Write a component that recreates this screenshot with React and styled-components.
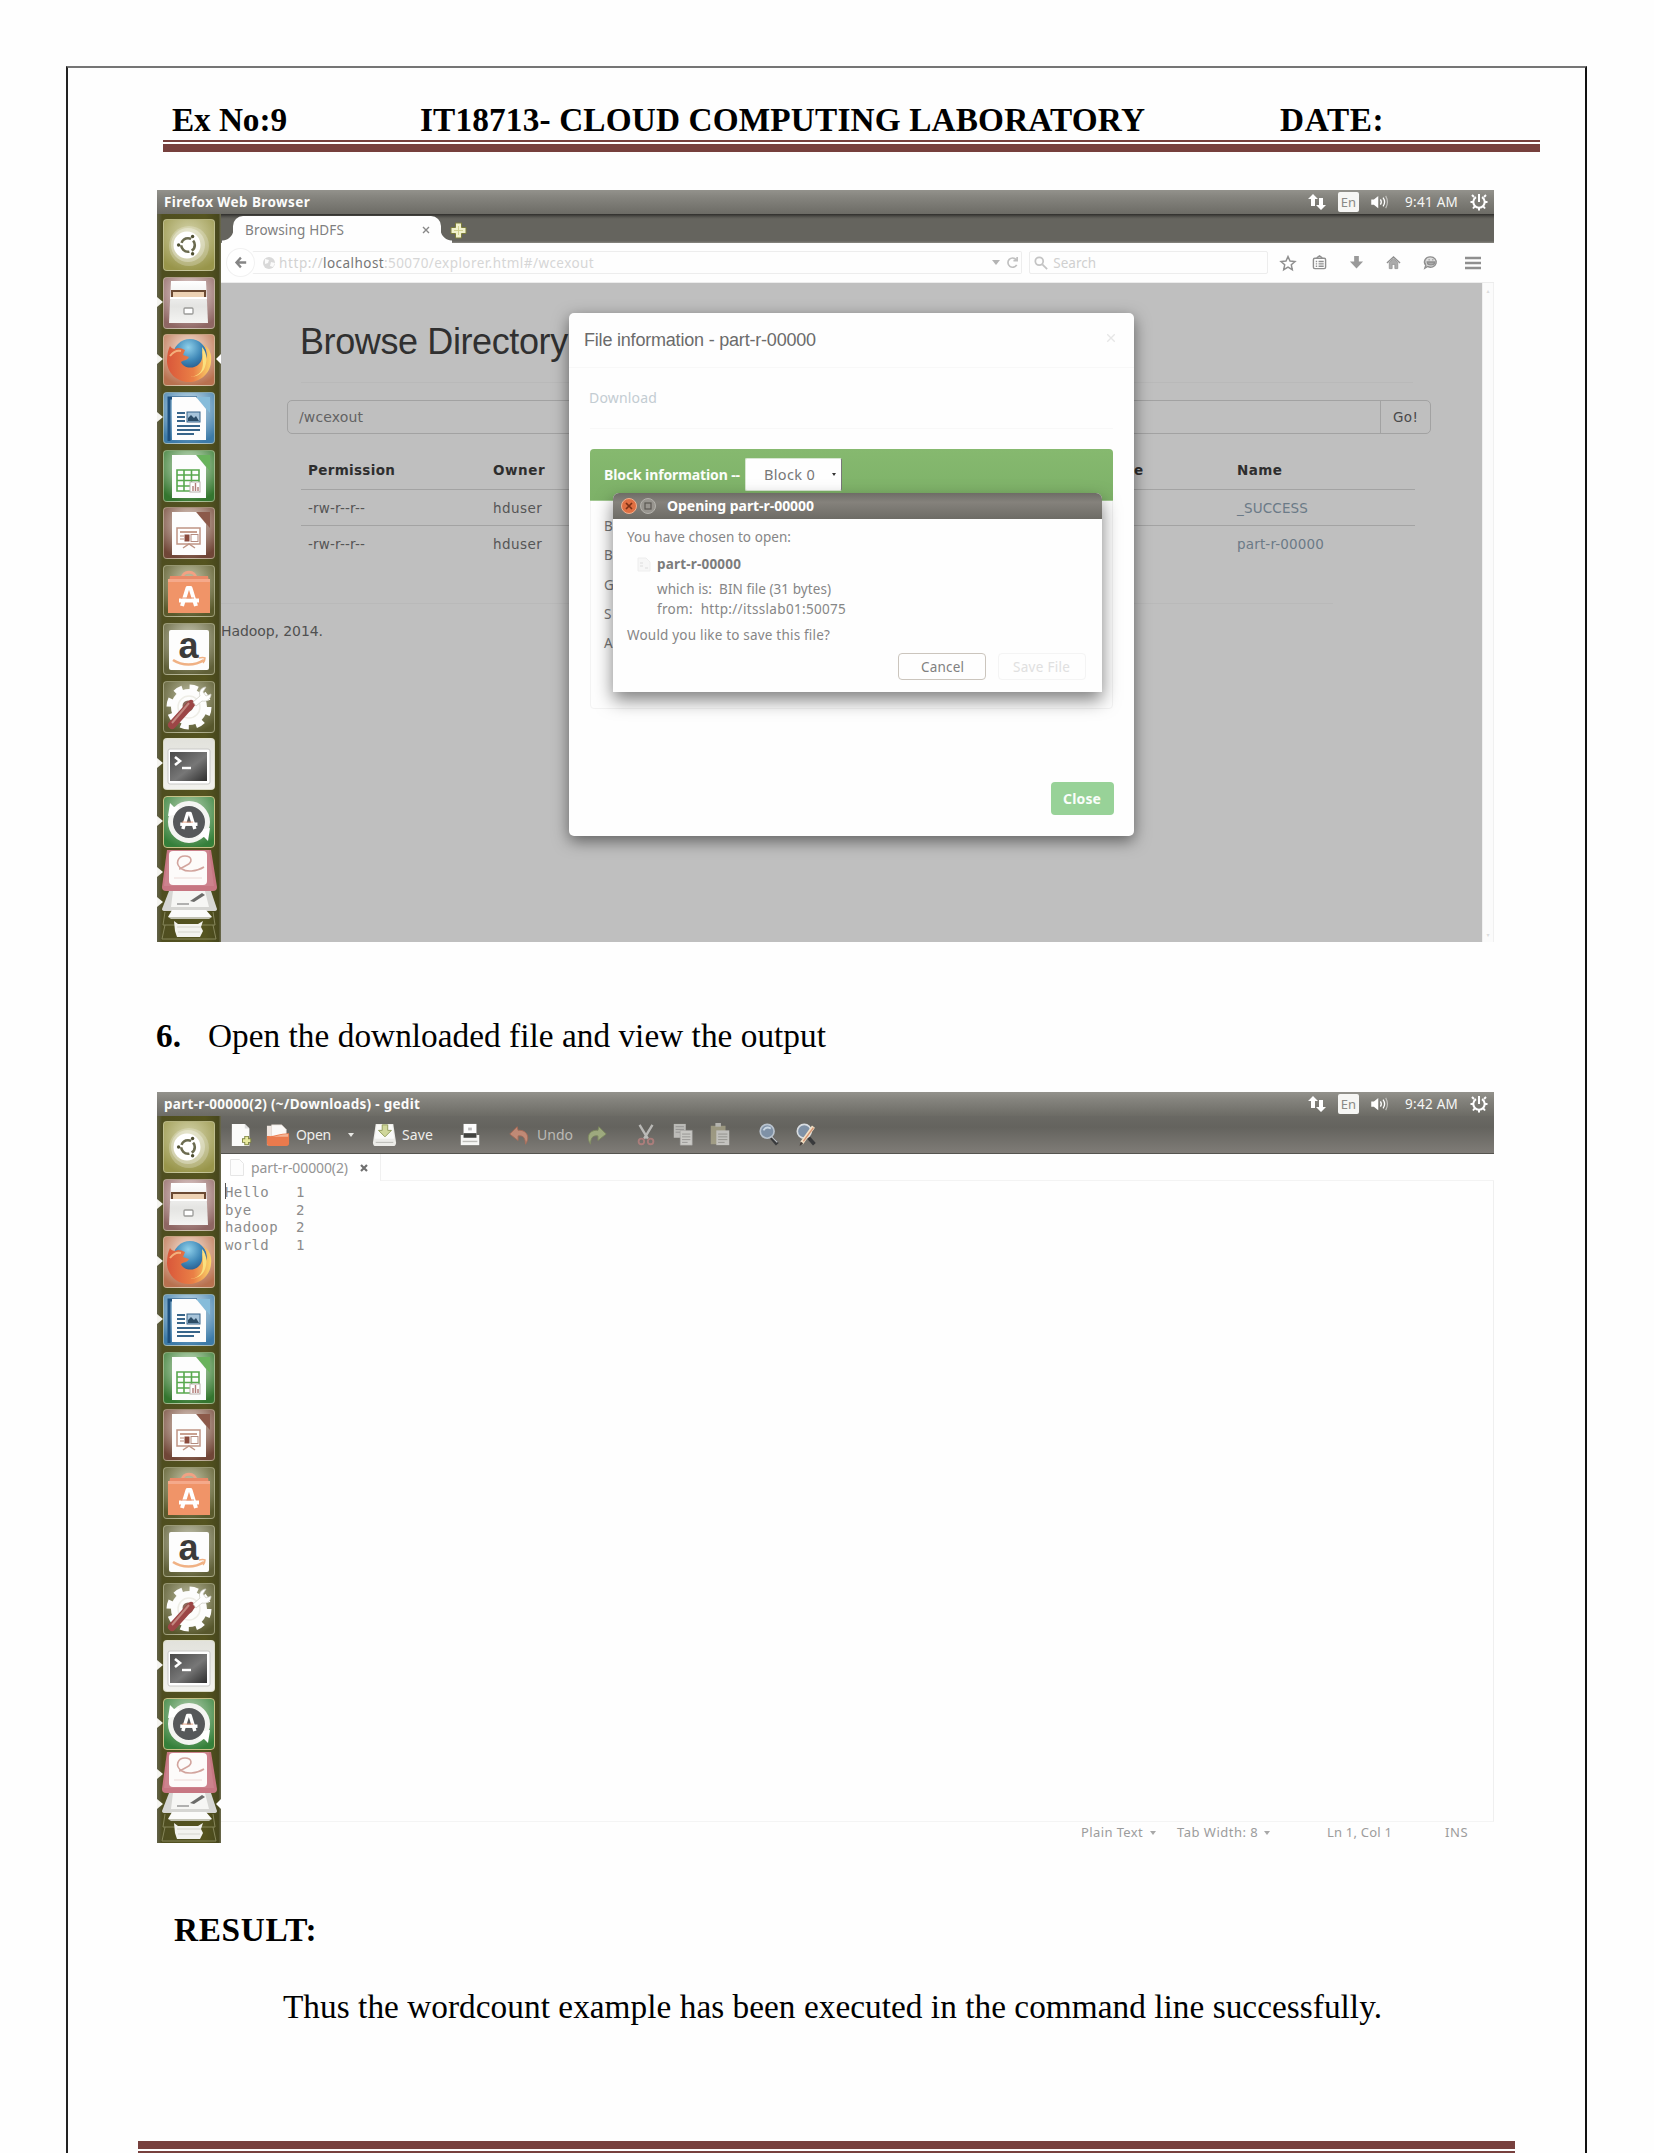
import React, { useLayoutEffect, useRef, useState } from "react";
import styled, { createGlobalStyle } from "styled-components";

const serif = '"Liberation Serif", "Times New Roman", serif';
const sans = '"Liberation Sans", Arial, sans-serif';
const ui = '"Noto Sans", "Open Sans", sans-serif';
const web = '"DejaVu Sans", Verdana, sans-serif';
const mono = '"DejaVu Sans Mono", monospace';

const Global = createGlobalStyle`
  * { box-sizing: border-box; }
  html, body { margin: 0; padding: 0; background: #fefefe; }
  body { width: 1654px; height: 2153px; overflow: hidden; }
  svg { display: block; flex: none; overflow: visible; }
`;

/* Text tracked out so that its line is exactly `w` pixels wide. */
const Line = styled.span`
  display: block;
  flex: none;
  width: ${(p) => p.$w}px;
  margin-left: ${(p) => p.$ml || 0}px;
  font-family: ${(p) => p.$font};
  font-size: ${(p) => p.$size}px;
  font-weight: ${(p) => (p.$bold ? 700 : 400)};
  color: ${(p) => p.$color};
  line-height: ${(p) => p.$lh || Math.round(p.$size * 1.3)}px;
  white-space: pre;
`;
function Fit({ w, ml, font = ui, size = 14, bold, color = "#777", lh, children }) {
  const ref = useRef(null);
  const [spacing, setSpacing] = useState(0);
  useLayoutEffect(() => {
    const el = ref.current;
    const natural = el.getBoundingClientRect().width;
    setSpacing((w - natural) / Math.max(1, el.textContent.length - 0.5));
  }, [w]);
  return (
    <Line $w={w} $ml={ml} $font={font} $size={size} $bold={bold} $color={color} $lh={lh}>
      <span ref={ref} style={{ letterSpacing: spacing ? `${spacing}px` : undefined }}>{children}</span>
    </Line>
  );
}
const Gap = styled.i`
  flex: none;
  width: ${(p) => p.$w}px;
`;

/* ---------- document ---------- */
const Page = styled.main`
  width: 1654px;
  height: 2153px;
  overflow: hidden;
  padding: 66px 0 0 66px;
  background: #fefefe;
`;
const Sheet = styled.div`
  width: 1521px;
  height: 2087px;
  border: solid #111;
  border-width: 2px 2px 0 2px;
  border-top-color: #757575;
  border-left-color: #222;
`;
const DocHeader = styled.header`
  display: flex;
  align-items: center;
  height: 72px;
  padding: 35px 0 4px 104px;
`;
const Rule = styled.div`
  width: 1377px;
  height: ${(p) => (p.$flip ? 13 : 12)}px;
  margin-top: ${(p) => (p.$flip ? 115 : 0)}px;
  margin-left: ${(p) => (p.$flip ? 70 : 95)}px;
  border: solid #77403d;
  border-width: ${(p) => (p.$flip ? "8px 0 3px" : "2px 0 8px")};
`;
const Paragraph = styled.div`
  display: flex;
  margin: ${(p) => p.$m};
`;

/* ---------- desktop frame ---------- */
const Desktop = styled.section`
  width: 1337px;
  height: ${(p) => p.$h}px;
  margin: ${(p) => p.$mt}px 0 0 89px;
  display: flex;
  flex-direction: column;
  overflow: hidden;
`;
const TopBar = styled.div`
  display: flex;
  align-items: center;
  flex: none;
  height: 24px;
  padding: 0 6px 0 7px;
  background: linear-gradient(#93928c, #85847e 30%, #6c6b65);
`;
const Tray = styled.div`
  display: flex;
  align-items: center;
  margin-left: auto;
`;
const Lang = styled.span`
  width: 21px;
  height: 20px;
  margin: 0 11px 0 12px;
  border-radius: 2px;
  background: #f6f6f4;
  color: #8a8a86;
  font: 13px/20px ${ui};
  text-align: center;
`;
const Body = styled.div`
  display: flex;
  flex: 1;
  min-height: 0;
`;
const Dock = styled.nav`
  flex: none;
  width: 64px;
  padding-top: 5px;
  display: flex;
  flex-direction: column;
  overflow: hidden;
  background: linear-gradient(90deg, #62624a, #4f4e20 8%, #55541f 75%, #47471d 96%, #6d6c52);
`;
const Slot = styled.div`
  position: relative;
  flex: none;
  width: 64px;
  height: 57.7px;
  padding-left: 6px;
`;
const StackSlot = styled.div`
  position: relative;
  flex: none;
  margin-top: -4px;
`;
const Pip = styled.i`
  position: absolute;
  top: ${(p) => p.$top || 20}px;
  ${(p) => (p.$right ? "right: 0; border-right: 5px solid #fff;" : "left: 0; border-left: 6px solid #f4f4f0;")}
  border-top: 5px solid transparent;
  border-bottom: 5px solid transparent;
`;
const Tile = styled.div`
  width: 52px;
  height: 52px;
  border-radius: 4px;
  border: 1px solid ${(p) => p.$edge || "rgba(210,210,180,.5)"};
  background: ${(p) => p.$bg};
`;
const Main = styled.div`
  flex: 1;
  min-width: 0;
  display: flex;
  flex-direction: column;
  position: relative;
  background: #fefefe;
`;

/* ---------- dock icons ---------- */
const Art = ({ children }) => (
  <svg width="50" height="50" viewBox="1 1 50 50">{children}</svg>
);
const sheetPath = "M9 5h24l10 12v31H9z";

const UbuntuIcon = () => (
  <Art>
    <circle cx="26" cy="27" r="20" fill="#fff" opacity=".22" />
    <circle cx="25" cy="26" r="17" fill="#fff" opacity=".3" />
    <circle cx="24" cy="26" r="13.5" fill="#fff" />
    <circle cx="25" cy="26" r="6.8" fill="none" stroke="#6b6b50" strokeWidth="2.600" strokeDasharray="11.7 2.5" strokeDashoffset="5" />
    <circle cx="15.6" cy="26" r="1.700" fill="#4f4f32" />
    <circle cx="29.6" cy="17.5" r="1.700" fill="#4f4f32" />
    <circle cx="29.6" cy="34.8" r="1.700" fill="#4f4f32" />
  </Art>
);
const FilesIcon = () => (
  <Art>
    <defs>
      <linearGradient id="drawer" x1="0" y1="0" x2="0" y2="1">
        <stop offset="0" stopColor="#fff" /><stop offset=".6" stopColor="#e4e4e2" /><stop offset="1" stopColor="#f4f4f2" />
      </linearGradient>
    </defs>
    <path d="M8 4h35l2 42H6z" fill="url(#drawer)" />
    <path d="M8 13h35v7H8z" fill="#6b4a33" />
    <path d="M10 15h31v6H10z" fill="#edd2b4" />
    <path d="M7 20h37v2H7z" fill="#fff" />
    <rect x="21" y="31" width="9" height="6" rx="1" fill="#fff" stroke="#9a9a98" strokeWidth="1.3" />
  </Art>
);
const FirefoxIcon = () => (
  <Art>
    <defs>
      <radialGradient id="globe" cx=".45" cy=".25" r=".8">
        <stop offset="0" stopColor="#8fd0ea" /><stop offset=".5" stopColor="#3d86b6" /><stop offset="1" stopColor="#1c3f72" />
      </radialGradient>
      <linearGradient id="fox" x1="0" y1="0" x2="1" y2="0">
        <stop offset="0" stopColor="#d9573a" /><stop offset=".6" stopColor="#ea8046" /><stop offset="1" stopColor="#fbd66a" />
      </linearGradient>
    </defs>
    <circle cx="27" cy="22" r="17" fill="url(#globe)" />
    <path d="M7 12c1 2 3 3 5 3 3-2 6-1 10 1l-2 5 6 2c-2 4-6 3-8 5 2 6 12 8 18 2 3-3 4-8 3-13 4 3 4 6 4 8 2-6 0-12-3-15 7 4 9 11 8 18-1 12-11 20-22 20C13 48 4 38 4 27c0-6 1-11 3-15z" fill="url(#fox)" />
    <path d="M39 13c4 4 6 12 3 20-2 6-8 10-15 10 9-1 13-6 13-14z" fill="#fbdf7e" />
    <path d="M7 22c3-4 6-6 11-5" fill="none" stroke="#f4b07c" strokeWidth="2" />
  </Art>
);
const WriterIcon = () => (
  <Art>
    <path d="M6 49V6h28" fill="none" stroke="#1d4f7c" strokeWidth="3" />
    <path d="M33 5l14 16V5z" fill="#86bcda" />
    <path d={sheetPath} fill="#fdfdfd" />
    <path d="M14 21h8M14 25h8M14 29h8M14 34h23M14 38h23M14 42h17" stroke="#38658a" strokeWidth="2" />
    <rect x="24" y="20" width="13" height="10" fill="#a7c4da" stroke="#38658a" />
    <path d="M25 29v-3l3-3 3 3 2-2 3 5z" fill="#2c4c66" />
  </Art>
);
const CalcIcon = () => (
  <Art>
    <path d="M33 5l14 16V5z" fill="#69b35c" />
    <path d={sheetPath} fill="#fdfdfd" />
    <path d="M14 20h22v21H14zM14 25h22M14 30.500h22M14 36h22M21 20v21M28.500 20v21" fill="none" stroke="#58a84e" strokeWidth="1.600" />
    <rect x="27" y="32" width="10" height="10" fill="#fff" stroke="#b9b2ae" />
    <path d="M30 41v-5M32.500 41v-8M35 41v-4" stroke="#b27c78" strokeWidth="1.400" />
  </Art>
);
const ImpressIcon = () => (
  <Art>
    <path d="M33 5l14 16V5z" fill="#8c5a4a" />
    <path d={sheetPath} fill="#fdfdfd" />
    <rect x="14" y="21" width="23" height="16" fill="#fff" stroke="#bf9484" strokeWidth="1.500" />
    <path d="M17 25h17" stroke="#c9a191" strokeWidth="2" />
    <path d="M17 29h4M17 32h4" stroke="#b98a78" />
    <rect x="21.500" y="27.500" width="5" height="7" fill="#8a4a3c" />
    <rect x="28" y="27.500" width="7" height="7" fill="#fff" stroke="#b58c80" />
    <path d="M20 41l6-4 6 4" fill="none" stroke="#bf9484" strokeWidth="1.500" />
  </Art>
);
const StoreA = ({ y = 0 }) => (
  <g transform={`translate(0 ${y})`}>
    <path d="M19 41l5.500-18h3L33 41" fill="none" stroke="#fff" strokeWidth="4" strokeLinejoin="round" />
    <path d="M16 35.500h20" stroke="#fff" strokeWidth="4" />
    <path d="M18 33h13" stroke="#e89a78" strokeWidth="1" />
  </g>
);
const SoftwareIcon = () => (
  <Art>
    <path d="M19 14c0-9 14-9 14 0" fill="none" stroke="#f2a183" strokeWidth="3" />
    <path d="M7 11h38l1 7H6z" fill="#e98a68" />
    <path d="M5 14h42v34H5z" fill="#f09468" />
    <path d="M5 14h42v3H5z" fill="#f5a98a" />
    <StoreA />
  </Art>
);
const AmazonLetter = styled.text`
  font: 700 36px ${sans};
  fill: #3c3b3a;
`;
const AmazonIcon = () => (
  <Art>
    <rect x="6" y="7" width="40" height="40" rx="2" fill="#fdfdfd" />
    <AmazonLetter x="15.500" y="34.500">a</AmazonLetter>
    <path d="M10 37c9 6 22 6 31 0" fill="none" stroke="#f0b184" strokeWidth="2.600" />
    <path d="M36 35c4-1 6 0 6 0s0 3-2 5" fill="none" stroke="#f0b184" strokeWidth="1.500" />
  </Art>
);
const SettingsIcon = () => (
  <Art>
    <circle cx="26" cy="26" r="18" fill="#fdfdfc" />
    <circle cx="26" cy="26" r="19" fill="none" stroke="#fdfdfd" strokeWidth="7" strokeDasharray="7.900 7.020" />
    <circle cx="26" cy="26" r="11" fill="none" stroke="#eeede6" strokeWidth="1.500" />
    <circle cx="25" cy="25" r="5.500" fill="#8b6a5c" />
    <path d="M9 44l19-21" stroke="#9c4646" strokeWidth="8" strokeLinecap="round" />
    <path d="M9 42l17-20" stroke="#c38880" strokeWidth="2" />
    <path d="M30 21l7-6c-2-5 2-9 6-9l-3 5 3 4 5-2c0 5-4 8-9 7l-6 5z" fill="#fff" stroke="#c9c8bd" strokeWidth=".7" />
  </Art>
);
const TerminalIcon = () => (
  <Art>
    <defs>
      <linearGradient id="term" x1="0" y1="0" x2="1" y2="1">
        <stop offset="0" stopColor="#4a4a4a" /><stop offset=".55" stopColor="#777" /><stop offset="1" stopColor="#2e2e2e" />
      </linearGradient>
    </defs>
    <rect x="5" y="11" width="42" height="35" rx="2" fill="#fff" stroke="#c8c8c6" />
    <rect x="7" y="14" width="37" height="29" fill="url(#term)" />
    <path d="M12 19l5 4-5 4" fill="none" stroke="#fff" strokeWidth="2.600" />
    <path d="M19 30h9" stroke="#fff" strokeWidth="2.400" />
  </Art>
);
const UpdaterIcon = () => (
  <Art>
    <circle cx="26" cy="26" r="19" fill="#56585a" />
    <circle cx="26" cy="26" r="18.500" fill="none" stroke="#f4f5f2" strokeWidth="5" />
    <path d="M5 20l2-13 4 4 6-1-6 9z" fill="#fff" />
    <path d="M47 32l-2 13-4-4-6 1 6-9z" fill="#fff" />
    <g transform="translate(3.500 2) scale(.86)"><StoreA y={-5} /></g>
  </Art>
);
const StackArt = () => (
  <svg width="64" height="92" viewBox="0 0 64 92">
    <path d="M10 0h44l6 37q0 4-4 4H9q-4 0-4-4z" fill="#c77682" />
    <path d="M12 0h40l5 36H7z" fill="#d18a94" opacity=".6" />
    <rect x="12" y="1" width="38" height="34" rx="4" fill="#fdfbfa" />
    <path d="M47 17c-8 5-18 5-22 2-8-5-4-13 3-13s8 6 2 9-7 4-8 4" fill="none" stroke="#d2a49d" strokeWidth="1.600" />
    <path d="M17 28h28" stroke="#ecd9d6" strokeWidth="1" />
    <path d="M12 41h42l6 18q0 2-3 2H8q-3 0-3-2z" fill="#d6d6d3" />
    <path d="M16 41h32l4 16H14z" fill="#f6f6f4" />
    <path d="M33 51l12-8 3 2-11 7z" fill="#6b6b69" />
    <path d="M20 54h12" stroke="#999" strokeWidth="1.500" />
    <path d="M15 60h34l6 7H11z" fill="#fbfbfa" />
    <path d="M11 67h44l-3 2H14z" fill="#c2c2b4" />
    <path d="M8 62l-2 13h52l-2-13M8 75l-3 14h54l-3-14" fill="none" stroke="#85855a" strokeWidth="1" />
    <path d="M17 71l4 3h20l5-3-2 6 2 4-3 6H20l-2-6z" fill="#f3f3ef" />
    <path d="M20 77h24M21 82h22" stroke="#d5d5cd" strokeWidth="1" />
  </svg>
);

const radial = (mid, edge) => `radial-gradient(circle at 50% 30%, ${mid}, ${edge} 85%)`;
const dockItems = [
  { Icon: UbuntuIcon, bg: radial("#d7d6ae", "#98954a") },
  { Icon: FilesIcon, bg: radial("#ecdcda", "#8e6663"), pip: true },
  { Icon: FirefoxIcon, bg: radial("#fae8dc", "#b8714f"), pip: true, active: true },
  { Icon: WriterIcon, bg: radial("#d5e8f2", "#3d7ba8"), pip: true },
  { Icon: CalcIcon, bg: radial("#d3e8cd", "#34762f") },
  { Icon: ImpressIcon, bg: radial("#e6d8ce", "#704637") },
  { Icon: SoftwareIcon, bg: radial("#c8c8ac", "#5a5a2c") },
  { Icon: AmazonIcon, bg: radial("#c9c9b6", "#606038") },
  { Icon: SettingsIcon, bg: radial("#bdbda2", "#57572c") },
  { Icon: TerminalIcon, bg: "linear-gradient(#e2e2dc, #f2f2ee)", pip: true },
  { Icon: UpdaterIcon, bg: radial("#b9d3b4", "#35803a"), edge: "#c7c187", pip: true },
];
function Launcher({ firefoxActive }) {
  return (
    <Dock>
      {dockItems.map(({ Icon, bg, edge, pip, active }, i) => (
        <Slot key={i}>
          {pip && <Pip />}
          {active && firefoxActive && <Pip $right />}
          <Tile $bg={bg} $edge={edge}><Icon /></Tile>
        </Slot>
      ))}
      <StackSlot>
        <Pip $top={17} />
        <Pip $top={47} />
        {!firefoxActive && <Pip $top={47} $right />}
        <StackArt />
      </StackSlot>
    </Dock>
  );
}

function Panel({ title, width, time }) {
  return (
    <TopBar>
      <Fit w={width} bold size={13.500} color="#fbfbfa">{title}</Fit>
      <Tray>
        <svg width="18" height="18" viewBox="0 0 18 18" fill="#fff">
          <path d="M5 1L0 6h3v7h4V6h3zM13 17l5-5h-3V5h-4v7H8z" />
        </svg>
        <Lang>En</Lang>
        <svg width="20" height="14" viewBox="0 0 20 16">
          <path d="M0 5h3l5-4v14l-5-4H0z" fill="#fff" />
          <path d="M10.500 5q2 3 0 6M13.500 3q3.500 5 0 10" fill="none" stroke="#fff" strokeWidth="1.500" />
          <path d="M16.500 1q4 7 0 14" fill="none" stroke="#c3c2be" strokeWidth="1.300" />
        </svg>
        <Fit w={53} ml={15} color="#f6f6f4" size={13.500}>{time}</Fit>
        <Gap $w={12} />
        <svg width="18" height="18" viewBox="0 0 18 18">
          <path d="M6 4.200a5.700 5.700 0 1 0 6 0" fill="none" stroke="#fff" strokeWidth="2" />
          <path d="M9 1v8" stroke="#fff" strokeWidth="2" />
          <path d="M4 4L2 2M14 4l2-2M3.500 9H.5M14.500 9h3M5 13l-2 2.500M13 13l2 2.500M9 15v2.500" stroke="#fff" strokeWidth="2" />
        </svg>
      </Tray>
    </TopBar>
  );
}

/* ---------- firefox ---------- */
const TabStrip = styled.div`
  display: flex;
  align-items: flex-end;
  flex: none;
  height: 29px;
  padding-left: 12px;
  background: linear-gradient(#2f2e2b, #565550 3px, #65645e 5px, #65645e 27px, #8a8983);
`;
const BrowserTab = styled.div`
  position: relative;
  display: flex;
  align-items: center;
  width: 208px;
  height: 27px;
  padding-left: 12px;
  border-radius: 10px 10px 0 0;
  background: #fefefe;
  &::before, &::after {
    content: "";
    position: absolute;
    bottom: 0;
    width: 12px;
    height: 14px;
  }
  &::before { left: -11px; background: radial-gradient(circle at 0 0, transparent 11px, #fefefe 12px); }
  &::after { right: -11px; background: radial-gradient(circle at 100% 0, transparent 11px, #fefefe 12px); }
`;
const NewTab = styled.div`
  margin: 0 0 4px 9px;
`;
const NavBar = styled.div`
  display: flex;
  align-items: center;
  flex: none;
  height: 40px;
  background: #fefefe;
  border-bottom: 1px solid #ececec;
`;
const Back = styled.div`
  display: grid;
  place-items: center;
  z-index: 1;
  width: 29px;
  height: 29px;
  margin: 0 -3px 0 5px;
  border: 1px solid #f1f1f1;
  border-radius: 50%;
  background: #fff;
`;
const Field = styled.div`
  display: flex;
  align-items: center;
  width: ${(p) => p.$w}px;
  height: 23px;
  margin-right: ${(p) => p.$mr}px;
  padding-left: ${(p) => p.$pl}px;
  border: 1px solid #ededed;
  border-left-color: ${(p) => (p.$open ? "transparent" : "#ededed")};
  border-radius: 2px;
`;
const Tools = styled.div`
  display: grid;
  grid-template-columns: 31px 32px 42px 32px 42px 42px;
  justify-items: center;
  align-items: center;
  margin-left: 5px;
`;
const Viewport = styled.div`
  display: flex;
  flex: 1;
  position: relative;
  overflow: hidden;
`;
const WebPage = styled.div`
  width: 1261px;
  background: #bfbfbf;
`;
const Scrollbar = styled.div`
  flex: 1;
  display: flex;
  flex-direction: column;
  justify-content: space-between;
  align-items: center;
  padding: 5px 0 4px;
  border: solid #f0f0f0;
  border-width: 0 1px;
  background: #fbfbfb;
  color: #ddd;
  font: 6px/6px ${web};
`;
const Heading = styled.div`
  margin: 39px 0 0 79px;
`;
const Hr = styled.div`
  width: 1112px;
  height: 1px;
  margin: ${(p) => p.$m};
  background: #b9b9b9;
`;
const PathBar = styled.div`
  display: flex;
  width: 1144px;
  height: 34px;
  margin: 17px 0 17px 66px;
  border: 1px solid #a2a2a2;
  border-radius: 5px;
`;
const PathInput = styled.div`
  display: flex;
  align-items: center;
  width: 1093px;
  padding-left: 11px;
  border-right: 1px solid #a2a2a2;
`;
const Go = styled.div`
  display: flex;
  align-items: center;
  padding-left: 12px;
`;
const Row = styled.div`
  display: grid;
  grid-template-columns: 185px 641px 103px 180px;
  align-items: center;
  width: 1114px;
  height: ${(p) => (p.$head ? 39 : 36)}px;
  margin-left: 80px;
  padding-left: 7px;
  border-bottom: ${(p) => (p.$last ? 0 : 1)}px solid #a3a3a3;
`;
const PageFooter = styled.div`
  margin-top: 18px;
`;
const Modal = styled.div`
  position: absolute;
  left: 348px;
  top: 30px;
  width: 565px;
  height: 523px;
  border-radius: 5px;
  background: #fefefe;
  box-shadow: 0 5px 16px rgba(0, 0, 0, 0.5);
`;
const ModalHead = styled.div`
  display: flex;
  height: 55px;
  padding: 10px 0 0 15px;
  border-bottom: 1px solid #f8f8f8;
`;
const Dismiss = styled.div`
  margin: 10px 0 0 290px;
`;
const ModalBody = styled.div`
  height: 80px;
  margin: 0 21px;
  padding-top: 18px;
`;
const Divider = styled.div`
  height: 1px;
  margin: -20px 21px 20px;
  background: #f8f8f8;
`;
const Block = styled.div`
  height: 260px;
  margin: 0 21px;
  border: 1px solid #f3f3f3;
  border-radius: 4px;
`;
const BlockHead = styled.div`
  display: flex;
  align-items: center;
  height: 52px;
  margin: -1px -1px 0;
  padding-left: 14px;
  border-radius: 4px 4px 0 0;
  border-bottom: 1px solid #a2c892;
  background: linear-gradient(#86b96f, #7db168);
`;
const Select = styled.div`
  display: flex;
  align-items: center;
  width: 97px;
  height: 33px;
  margin: 0 0 1px 5px;
  padding-left: 18px;
  border: 1px solid #d8e6d2;
  border-right-color: #777;
  border-radius: 2px;
  background: #fefefe;
`;
const Caret = styled.i`
  margin-left: ${(p) => p.$ml}px;
  border: solid transparent;
  border-width: ${(p) => p.$s + 1}px ${(p) => p.$s}px 0;
  border-top-color: ${(p) => p.$c};
`;
const BlockLines = styled.div`
  padding: 11px 0 0 13px;
  color: #777;
  font: 13.500px/29.300px ${ui};
`;
const ModalFoot = styled.div`
  display: flex;
  justify-content: flex-end;
  margin: 73px 20px 0 0;
`;
const CloseButton = styled.div`
  display: flex;
  align-items: center;
  width: 63px;
  height: 33px;
  padding-left: 12px;
  border-radius: 4px;
  background: #98d298;
`;
const Dialog = styled.div`
  position: absolute;
  left: 392px;
  top: 210px;
  width: 489px;
  height: 199px;
  border-radius: 6px 6px 0 0;
  background: #fefefe;
  box-shadow: 0 8px 18px rgba(0, 0, 0, 0.5);
`;
const DialogTitle = styled.div`
  display: flex;
  align-items: center;
  height: 26px;
  padding-left: 8px;
  border-radius: 6px 6px 0 0;
  background: linear-gradient(#6e6c66, #85827c 35%, #6d6b65);
`;
const DialogText = styled.div`
  display: flex;
  height: ${(p) => p.$h}px;
  padding-left: ${(p) => p.$pl || 14}px;
  align-items: center;
`;
const Buttons = styled.div`
  display: flex;
  gap: 12px;
  margin: -3px 0 0 285px;
`;
const DialogButton = styled.div`
  display: flex;
  align-items: center;
  width: 88px;
  height: 27px;
  padding-left: ${(p) => (p.$faint ? 14 : 22)}px;
  border: 1px solid ${(p) => (p.$faint ? "#f4f4f4" : "#cbc5bd")};
  border-radius: 4px;
`;
const WindowDot = styled.div`
  display: grid;
  place-items: center;
  width: 16px;
  height: 16px;
  margin-right: 3px;
  border-radius: 50%;
  border: 1px solid ${(p) => (p.$close ? "#f1b08f" : "#b4b2ac")};
  background: ${(p) => (p.$close ? "#e06f42" : "#98958f")};
`;

const Stroke = ({ w = 16, sw = 1.500, c = "#8f8f8f", children }) => (
  <svg width={w} height={w} viewBox="0 0 16 16" fill="none" stroke={c} strokeWidth={sw}>{children}</svg>
);
const Cross = ({ size = 8, c, sw }) => (
  <svg width={size} height={size} viewBox="0 0 8 8"><path d="M1 1l6 6M7 1L1 7" stroke={c} strokeWidth={sw} /></svg>
);

const files = [
  { name: "_SUCCESS", w: 71 },
  { name: "part-r-00000", w: 87 },
];

function Browser() {
  return (
    <Main>
      <TabStrip>
        <BrowserTab>
          <Fit w={99} size={13.500} color="#7f7f7f">Browsing HDFS</Fit>
          <Gap $w={78} />
          <Cross c="#888" sw={1.400} />
        </BrowserTab>
        <NewTab>
          <svg width="17" height="17" viewBox="0 0 17 17">
            <path d="M5.500 1h6v4.500H16v6h-4.500V16h-6v-4.500H1v-6h4.500z" fill="#f1f1cc" stroke="#7c7d3c" strokeWidth="1" />
            <path d="M8.500 4v9M4 8.500h9" stroke="#d2d190" strokeWidth="1" />
          </svg>
        </NewTab>
      </TabStrip>
      <NavBar>
        <Back><Stroke w={13} sw={2.800} c="#858585"><path d="M8.500 2L3 8l5.500 6M3 8h12" /></Stroke></Back>
        <Field $w={771} $mr={7} $pl={9} $open>
          <svg width="14" height="14" viewBox="0 0 14 14"><circle cx="7" cy="7" r="6" fill="#d9d9d9" /><path d="M3 3l4 1-1 3-3 1zM9 6l4 1-2 4-3-1z" fill="#fbfbfb" /></svg>
          <Fit w={44} ml={3} size={13.500} color="#d2d2d2">http://</Fit>
          <Fit w={61} size={13.500} color="#777">localhost</Fit>
          <Fit w={210} size={13.500} color="#d6d6d6">:50070/explorer.html#/wcexout</Fit>
          <Caret $s={4} $c="#b4b4b4" $ml={398} />
          <Gap $w={6} />
          <svg width="13" height="13" viewBox="0 0 14 14" fill="none" stroke="#c0c0c0" strokeWidth="1.800"><path d="M11.500 9.500A5 5 0 1 1 11 4M12 1v4H8" /></svg>
        </Field>
        <Field $w={239} $mr={0} $pl={4}>
          <Stroke w={14} sw={2} c="#c4c4c4"><circle cx="6" cy="6" r="4.500" /><path d="M9.500 9.500L15 15" /></Stroke>
          <Fit w={43} ml={5} size={13.500} color="#d0d0d0">Search</Fit>
        </Field>
        <Tools>
          <Stroke><path d="M8 1.500l2 4.500 5 .500-3.700 3.300 1 4.900L8 12.200l-4.300 2.500 1-4.900L1 6.500 6 6z" /></Stroke>
          <Stroke w={15}><rect x="1.500" y="3.500" width="13" height="11" rx="1.500" /><path d="M5 3l3-2 3 2M4 7h1.500M4 9.500h1.500M4 12h1.500M7 7h5.500M7 9.500h5.500M7 12h5.500" /></Stroke>
          <Stroke w={15}><path d="M5.500 1h5v6H15l-7 7.500L1 7h4.500z" fill="#9a9a9a" stroke="none" /></Stroke>
          <Stroke w={15}><path d="M1 8.500L8 2l7 6.500" /><path d="M3.500 8v6.500h3V10h3v4.500h3V8L8 4z" fill="#ababab" stroke="#999" strokeWidth="1" /></Stroke>
          <Stroke w={15}><path d="M8 2a6 5.500 0 1 1-3 10.200L2 14l1-3A6 5.500 0 0 1 8 2z" fill="#ddd" /><path d="M4.500 7.500h8c0 4-8 4-8 0zM6 5h1M10 5h1" fill="#aaa" /></Stroke>
          <Stroke sw={2.400}><path d="M0 3h16M0 8h16M0 13h16" /></Stroke>
        </Tools>
      </NavBar>
      <Viewport>
        <WebPage>
          <Heading><Fit w={268} font={sans} size={36} lh={40} color="#303030">Browse Directory</Fit></Heading>
          <Hr $m="20px 0 0 80px" />
          <PathBar>
            <PathInput><Fit w={64} font={web} color="#636363">/wcexout</Fit></PathInput>
            <Go><Fit w={25} font={web} size={13.500} color="#4a4a4a">Go!</Fit></Go>
          </PathBar>
          <Row $head>
            <Fit w={87} font={web} bold size={13.500} color="#2e2e2e">Permission</Fit>
            <Fit w={52} font={web} bold size={13.500} color="#2e2e2e">Owner</Fit>
            <Fit w={8} font={web} bold size={13.500} color="#2e2e2e">e</Fit>
            <Fit w={45} font={web} bold size={13.500} color="#2e2e2e">Name</Fit>
          </Row>
          {files.map((f, i) => (
            <Row key={f.name} $last={i === 1}>
              <Fit w={57} font={web} size={13.500} color="#555">-rw-r--r--</Fit>
              <Fit w={49} font={web} size={13.500} color="#555">hduser</Fit>
              <span />
              <Fit w={f.w} font={web} size={13.500} color="#6b7a87">{f.name}</Fit>
            </Row>
          ))}
          <Hr $m="41px 0 0 0" />
          <PageFooter><Fit w={102} font={web} color="#505050">Hadoop, 2014.</Fit></PageFooter>
        </WebPage>
        <Scrollbar><span>▴</span><span>▾</span></Scrollbar>
        <Modal>
          <ModalHead>
            <Fit w={232} font={sans} size={18} lh={34} color="#6b6b6b">File information - part-r-00000</Fit>
            <Dismiss><Cross size={10} c="#e6e6e6" sw={1} /></Dismiss>
          </ModalHead>
          <ModalBody><Fit w={68} ml={-1} lh={24} size={14} color="#c3ccd2">Download</Fit></ModalBody>
          <Divider />
          <Block>
            <BlockHead>
              <Fit w={136} bold size={14} color="#fbfdfa">Block information --</Fit>
              <Select>
                <Fit w={51} size={14.500} color="#777">Block 0</Fit>
                <Caret $s={2.500} $c="#333" $ml={17} />
              </Select>
            </BlockHead>
            <BlockLines>B<br />B<br />G<br />S<br />A</BlockLines>
          </Block>
          <ModalFoot>
            <CloseButton><Fit w={38} bold size={14} color="#fafdfa">Close</Fit></CloseButton>
          </ModalFoot>
        </Modal>
        <Dialog>
          <DialogTitle>
            <WindowDot $close><Cross c="#7b3015" sw={1.700} /></WindowDot>
            <WindowDot><svg width="8" height="8" viewBox="0 0 8 8"><rect x="1" y="1" width="6" height="6" fill="none" stroke="#5a5852" strokeWidth="1.200" /></svg></WindowDot>
            <Fit w={147} ml={8} bold size={14} color="#fff">Opening part-r-00000</Fit>
          </DialogTitle>
          <DialogText $h={35}><Fit w={164} size={13.500} color="#868686">You have chosen to open:</Fit></DialogText>
          <DialogText $h={20} $pl={24}>
            <svg width="14" height="15" viewBox="0 0 14 15"><path d="M1 1h8l4 4v9H1z" fill="#f7f7f7" stroke="#eee" /><path d="M3 6h3M3 9h3M8 11h3" stroke="#ddd" /></svg>
            <Fit w={84} ml={6} bold size={13.500} color="#7c7c7c">part-r-00000</Fit>
          </DialogText>
          <DialogText $h={30} $pl={44}><Fit w={174} size={13.500} color="#868686">{"which is:  BIN file (31 bytes)"}</Fit></DialogText>
          <DialogText $h={10} $pl={44}><Fit w={189} size={13.500} color="#868686">{"from:  http://itsslab01:50075"}</Fit></DialogText>
          <DialogText $h={42} $pl={14}><Fit w={203} size={13.500} color="#868686">Would you like to save this file?</Fit></DialogText>
          <Buttons>
            <DialogButton><Fit w={43} size={13.500} color="#808080">Cancel</Fit></DialogButton>
            <DialogButton $faint><Fit w={57} size={13.500} color="#e0e0e0">Save File</Fit></DialogButton>
          </Buttons>
        </Dialog>
      </Viewport>
    </Main>
  );
}

/* ---------- gedit ---------- */
const ToolBar = styled.div`
  display: flex;
  align-items: center;
  flex: none;
  height: 38px;
  padding-left: 9px;
  border-bottom: 1px solid #55544f;
  background: linear-gradient(#6a6964, #64635e 30%, #7f7c77);
`;
const FileTabs = styled.div`
  display: flex;
  flex: none;
  height: 27px;
`;
const FileTab = styled.div`
  display: flex;
  align-items: center;
  width: 160px;
  padding-left: 9px;
  background: #fff;
  border-right: 1px solid #f0f0f0;
`;
const TabFill = styled.div`
  flex: 1;
  border-bottom: 1px solid #f3f3f3;
`;
const Editor = styled.div`
  position: relative;
  flex: 1;
  padding: 3px 0 0 4px;
  border-right: 1px solid #efefef;
  border-bottom: 1px solid #f4f4f4;
`;
const Cursor = styled.i`
  position: absolute;
  left: 4px;
  top: 2px;
  width: 1px;
  height: 16px;
  background: #555;
`;
const EditorRow = styled.div`
  display: flex;
  align-items: center;
  height: 17.500px;
`;
const Word = styled.span`
  width: ${(p) => (p.$num ? 9 : 71)}px;
  color: #8b8b8b;
  font: 14px/17px ${mono};
  letter-spacing: 0.400px;
`;
const StatusBar = styled.div`
  display: flex;
  align-items: center;
  flex: none;
  height: 21px;
  padding-left: 860px;
`;
const lines = [["Hello", 1], ["bye", 2], ["hadoop", 2], ["world", 1]];

const GIcon = ({ w = 26, dim, children }) => (
  <svg width={w} height="24" viewBox={`0 0 ${w} 26`} opacity={dim ? 0.65 : 1}>{children}</svg>
);

function Gedit() {
  return (
    <Main>
      <ToolBar>
        <GIcon w={24}>
          <path d="M1 1h14l5 5v19H1z" fill="#fbfbfa" /><path d="M15 1v5h5" fill="#ddd" />
          <path d="M17 14v10M12 19h10" stroke="#7f8442" strokeWidth="5" /><path d="M17 15v8M13 19h8" stroke="#e8ea9e" strokeWidth="3" />
        </GIcon>
        <Gap $w={11} />
        <GIcon>
          <path d="M1 3h10l3 3v18H1z" fill="#eee5df" /><path d="M6 2h11l5 5v15H6z" fill="#fbf9f7" stroke="#d8cdc6" strokeWidth=".6" />
          <path d="M1 14c8 1 12-3 24-3v11q0 3-3 3H4q-3 0-3-3z" fill="#ea7a4d" /><path d="M2 15c8 1 12-3 22-3v3H2z" fill="#f4b394" />
        </GIcon>
        <Fit w={35} ml={5} size={14} color="#efefec">Open</Fit>
        <Caret $s={3} $c="#e8e8e4" $ml={17} />
        <Gap $w={18} />
        <GIcon w={25}>
          <path d="M3 1h19l3 20q0 4-3 4H3q-3 0-3-4z" fill="#ecece8" /><path d="M4 2h17l2 15H2z" fill="#fafaf8" />
          <path d="M10 2h6v6h4l-7 7-7-7h4z" fill="#d0d79a" stroke="#8f9958" /><path d="M3 21h19" stroke="#b5b5b0" />
        </GIcon>
        <Fit w={31} ml={5} size={14} color="#efefec">Save</Fit>
        <Gap $w={26} />
        <GIcon w={22}>
          <path d="M4 1h14v12H4z" fill="#fdfdfd" /><path d="M9 5h4v3H9z" fill="#bbb" /><path d="M1 13h20v11H1z" fill="#f6f6f4" /><path d="M4 11h14v5H4z" fill="#434340" /><path d="M3 20h16" stroke="#bcbcb8" strokeWidth="1.500" />
        </GIcon>
        <Gap $w={27} />
        <GIcon w={22} dim>
          <path d="M9 4L1 12l9 7v-5c6-1 8 3 8 9 6-9 0-16-8-15z" fill="#ee9c80" stroke="#c56b50" />
        </GIcon>
        <Fit w={36} ml={7} size={14} color="#bcbab6">Undo</Fit>
        <Gap $w={13} />
        <GIcon w={22} dim>
          <path d="M13 4l8 8-9 7v-5c-6-1-8 3-8 9-6-9 0-16 8-15z" fill="#b9cc8c" stroke="#84985a" />
        </GIcon>
        <Gap $w={28} />
        <GIcon w={20} dim>
          <path d="M3 2l9 15M17 2L8 17" stroke="#e6e6e4" strokeWidth="2.600" /><circle cx="5" cy="20" r="3" fill="none" stroke="#c98483" strokeWidth="2" /><circle cx="15" cy="20" r="3" fill="none" stroke="#c98483" strokeWidth="2" />
        </GIcon>
        <Gap $w={17} />
        <GIcon w={20} dim>
          <path d="M0 1h13v15H0z" fill="#e8e8e5" /><path d="M2 4h9M2 7h9M2 10h5" stroke="#aaa" /><path d="M7 8h13v16H7z" fill="#fafaf7" stroke="#bbb" strokeWidth=".6" /><path d="M9 12h9M9 15h9M9 18h9M9 21h6" stroke="#aaa" />
        </GIcon>
        <Gap $w={17} />
        <GIcon w={20} dim>
          <path d="M0 3h16v20H0z" fill="#b8b392" /><path d="M5 0h6v4H5z" fill="#deded9" /><path d="M6 8h14v16H6z" fill="#efefec" /><path d="M8 12h10M8 15h10M8 18h10M8 21h7" stroke="#a5a5a0" />
        </GIcon>
        <Gap $w={28} />
        <GIcon w={22}>
          <path d="M13 15l7 8" stroke="#393a3c" strokeWidth="4" /><path d="M14 15l6 6" stroke="#b9bcc0" strokeWidth="1.500" /><circle cx="9" cy="9" r="7.500" fill="#7f91a6" stroke="#b9c3ce" strokeWidth="1.800" /><path d="M5 8q3-5 8-2" stroke="#c9d6e2" strokeWidth="2" fill="none" />
        </GIcon>
        <Gap $w={15} />
        <GIcon w={24}>
          <path d="M13 15l7 8" stroke="#393a3c" strokeWidth="4" /><circle cx="9" cy="9" r="7.500" fill="#7f91a6" stroke="#d8dde2" strokeWidth="1.800" /><path d="M6 22L19 4" stroke="#f3e1c5" strokeWidth="4" /><path d="M8 20L19 5" stroke="#d49271" strokeWidth="1.500" /><path d="M4 25l1-5 3 2z" fill="#443d38" />
        </GIcon>
      </ToolBar>
      <FileTabs>
        <FileTab>
          <svg width="14" height="17" viewBox="0 0 14 17"><path d="M.5.500h9l4 4v12H.5z" fill="#fdfdfd" stroke="#e6e6e6" /></svg>
          <Fit w={97} ml={7} size={14} color="#949494">part-r-00000(2)</Fit>
          <Gap $w={12} />
          <Cross c="#707070" sw={2.200} />
        </FileTab>
        <TabFill />
      </FileTabs>
      <Editor>
        <Cursor />
        {lines.map(([word, n]) => (
          <EditorRow key={word}><Word>{word}</Word><Word $num>{n}</Word></EditorRow>
        ))}
      </Editor>
      <StatusBar>
        <Fit w={62} size={13} color="#9c9c9c">Plain Text</Fit>
        <Caret $s={3} $c="#a8a8a8" $ml={7} />
        <Fit w={81} ml={21} size={13} color="#9c9c9c">Tab Width: 8</Fit>
        <Caret $s={3} $c="#a8a8a8" $ml={6} />
        <Fit w={65} ml={57} size={13} color="#9c9c9c">Ln 1, Col 1</Fit>
        <Fit w={23} ml={53} size={13} color="#9c9c9c">INS</Fit>
      </StatusBar>
    </Main>
  );
}

export default function App() {
  return (
    <Page>
      <Global />
      <Sheet>
        <DocHeader>
          <Fit w={115} font={serif} bold size={33.300} lh={32} color="#000">Ex No:9</Fit>
          <Fit w={725} ml={133} font={serif} bold size={33.300} lh={32} color="#000">IT18713- CLOUD COMPUTING LABORATORY</Fit>
          <Fit w={104} ml={135} font={serif} bold size={33.300} lh={32} color="#000">DATE:</Fit>
        </DocHeader>
        <Rule />
        <Desktop $h={752} $mt={38}>
          <Panel title="Firefox Web Browser" width={146} time="9:41 AM" />
          <Body>
            <Launcher firefoxActive />
            <Browser />
          </Body>
        </Desktop>
        <Paragraph $m="75px 0 0 88px">
          <Fit w={25} font={serif} bold size={33.300} lh={38} color="#000">6.</Fit>
          <Fit w={618} ml={27} font={serif} size={33.300} lh={38} color="#000">Open the downloaded file and view the output</Fit>
        </Paragraph>
        <Desktop $h={751} $mt={37}>
          <Panel title="part-r-00000(2) (~/Downloads) - gedit" width={256} time="9:42 AM" />
          <Body>
            <Launcher />
            <Gedit />
          </Body>
        </Desktop>
        <Paragraph $m="68px 0 0 106px">
          <Fit w={143} font={serif} bold size={33.300} lh={38} color="#000">RESULT:</Fit>
        </Paragraph>
        <Paragraph $m="39px 0 0 215px">
          <Fit w={1099} font={serif} size={33.300} lh={38} color="#000">Thus the wordcount example has been executed in the command line successfully.</Fit>
        </Paragraph>
        <Rule $flip />
      </Sheet>
    </Page>
  );
}
